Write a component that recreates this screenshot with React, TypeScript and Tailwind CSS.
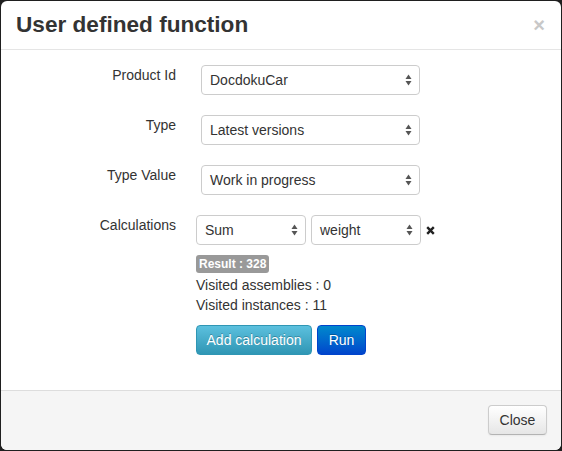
import React from "react";

const font = { fontFamily: '"Liberation Sans", Arial, sans-serif' };

function Arrows() {
  return (
    <svg width="7" height="12" viewBox="0 0 7 12" className="shrink-0">
      <path d="M3.5 0.5 L6.5 5 L0.5 5 Z" fill="#555" />
      <path d="M0.5 7 L6.5 7 L3.5 11.5 Z" fill="#555" />
    </svg>
  );
}

function FakeSelect({ value, className }: { value: string; className: string }) {
  return (
    <div
      className={`h-[30px] flex items-center justify-between pl-[8px] pr-[7px] border border-[#cccccc] rounded-[4px] bg-white text-[14px] text-[#333333] ${className}`}
    >
      <span className="leading-none">{value}</span>
      <Arrows />
    </div>
  );
}

function Row({ label, children }: { label: string; children: React.ReactNode }) {
  return (
    <div className="flex">
      <div className="w-[160px] shrink-0 text-right text-[14px] leading-[20px] text-[#333333]">{label}</div>
      <div className="ml-[20px] flex-1">{children}</div>
    </div>
  );
}

export default function App() {
  return (
    <div className="w-[562px] h-[451px] bg-[#1f1f1f] p-px" style={font}>
      <div className="w-full h-full bg-white rounded-[6px] flex flex-col overflow-hidden">
        <div className="h-[49px] shrink-0 border-b border-[#e5e5e5] flex items-center justify-between pl-[15px] pr-[15px]">
          <h3 className="text-[22.6px] font-bold text-[#333333] leading-none pt-[1px]">User defined function</h3>
          <span className="text-[20px] font-bold text-[#c8c8c8] leading-none pr-[1px]">×</span>
        </div>
        <div className="flex-1 px-[15px] pt-[15px] flex flex-col gap-[20px]">
          <Row label="Product Id">
            <FakeSelect value="DocdokuCar" className="ml-[5px] w-[219px]" />
          </Row>
          <Row label="Type">
            <FakeSelect value="Latest versions" className="ml-[5px] w-[219px]" />
          </Row>
          <Row label="Type Value">
            <FakeSelect value="Work in progress" className="ml-[5px] w-[219px]" />
          </Row>
          <Row label="Calculations">
            <div className="flex flex-col items-start">
              <div className="flex items-center gap-[5px]">
                <FakeSelect value="Sum" className="w-[110px]" />
                <FakeSelect value="weight" className="w-[110px]" />
                <svg width="9" height="9" viewBox="0 0 9 9" className="ml-[0px]">
                  <path d="M1.2 1.2 L7.8 7.8 M7.8 1.2 L1.2 7.8" stroke="#222" strokeWidth="2.4" strokeLinecap="butt" />
                </svg>
              </div>
              <span className="mt-[10px] mb-[2px] h-[18px] inline-flex items-center px-[3px] rounded-[3px] bg-[#999999] text-white text-[12px] font-bold leading-none">
                Result : 328
              </span>
              <div className="text-[14px] leading-[20px] text-[#333333]">Visited assemblies : 0</div>
              <div className="text-[14px] leading-[20px] text-[#333333]">Visited instances : 11</div>
              <div className="mt-[10px] flex gap-[5px]">
                <button className="h-[30px] w-[116px] rounded-[4px] border border-[#2f96b4] bg-gradient-to-b from-[#5bc0de] to-[#2f96b4] text-white text-[14px] leading-none [text-shadow:0_-1px_0_rgba(0,0,0,0.25)]">
                  Add calculation
                </button>
                <button className="h-[30px] w-[49px] rounded-[4px] border border-[#0044cc] bg-gradient-to-b from-[#0088cc] to-[#0044cc] text-white text-[14px] leading-none [text-shadow:0_-1px_0_rgba(0,0,0,0.25)]">
                  Run
                </button>
              </div>
            </div>
          </Row>
        </div>
        <div className="h-[60px] shrink-0 border-t border-[#dddddd] bg-[#f5f5f5] flex items-start justify-end pt-[14px] pr-[14px]">
          <button className="h-[30px] w-[59px] rounded-[4px] border border-[#cccccc] border-b-[#b3b3b3] bg-gradient-to-b from-white to-[#e6e6e6] text-[#333333] text-[14px] leading-none shadow-[inset_0_1px_0_rgba(255,255,255,0.2),0_1px_2px_rgba(0,0,0,0.05)]">
            Close
          </button>
        </div>
      </div>
    </div>
  );
}
